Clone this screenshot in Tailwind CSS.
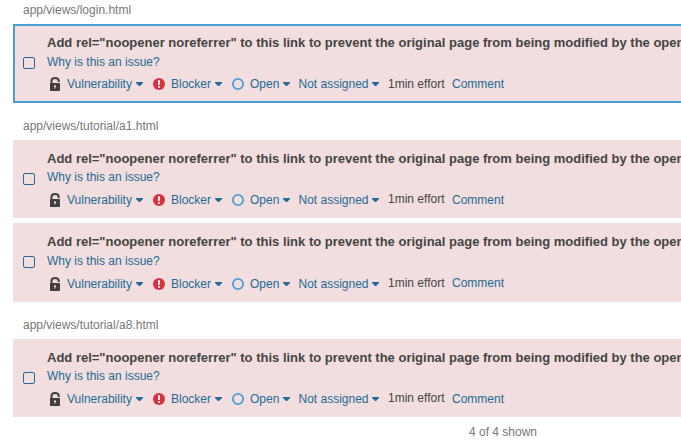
<!DOCTYPE html>
<html lang="en">
<head>
<meta charset="utf-8">
<title>Issues</title>
<script src="https://cdn.jsdelivr.net/npm/@tailwindcss/browser@4"></script>
</head>
<body class="w-[681px] h-[447px] overflow-hidden bg-white text-[12px] leading-[16px] text-[#444]" style="font-family:'Liberation Sans',Arial,sans-serif">
<svg class="hidden">
  <symbol id="caret" viewBox="0 0 7 4"><path d="M0 0h7v1L4 4H3L0 1z" fill="#236a97"/></symbol>
  <symbol id="lock" viewBox="0 0 10 14"><path d="M1.500 7V3.800C1.500 2 3 1 5 1s3.700 1 3.700 2.800V5" fill="none" stroke="#404040" stroke-width="2"/><path fill-rule="evenodd" d="M.7 6h8.600q.7 0 .7.7v6.600q0 .7-.7.7H.7q-.7 0-.7-.7V6.700q0-.7.7-.7zM4 8.500v1.500h.5v1.500h1V10H6V8.500z" fill="#404040"/></symbol>
  <symbol id="blocker" viewBox="0 0 12 12"><circle cx="6" cy="6" r="6" fill="#d4333f"/><path d="M5 2.200h2L6.800 7H5.200zM5.100 8h1.800v1.700H5.100z" fill="#fff"/></symbol>
  <symbol id="open" viewBox="0 0 12 12"><circle cx="6" cy="6" r="5.100" fill="none" stroke="#4b9fd5" stroke-width="1.800"/></symbol>
</svg>
<main class="pl-[13px] flex flex-col">
  <p class="h-[24px] pl-[10px] pt-[2px] text-[#777]">app/views/login.html</p>
  <div data-issue class="h-[79px] w-[700px] bg-[#f2dede] outline-2 -outline-offset-2 outline-[#4b9fd5]"></div>
  <p class="h-[37px] pl-[10px] pt-[15px] text-[#777]">app/views/tutorial/a1.html</p>
  <div data-issue="compact" class="h-[78px] w-[700px] bg-[#f2dede]"></div>
  <div data-issue="roomy" class="mt-[5px] h-[79px] w-[700px] bg-[#f2dede]"></div>
  <p class="h-[37px] pl-[10px] pt-[15px] text-[#777]">app/views/tutorial/a8.html</p>
  <div data-issue="compact" class="h-[78px] w-[700px] bg-[#f2dede]"></div>
  <footer class="pl-[456px] pt-[7px] text-[#777]">4 of 4 shown</footer>
</main>
<template id="issue">
  <div class="flex pl-[10px] pt-[11px]">
    <span class="mt-[22px] size-[12px] shrink-0 rounded-[2px] border border-[#236a97]"></span>
    <div class="ml-[12px] whitespace-nowrap text-[#236a97]">
      <h3 class="h-[19px] text-[13px] font-bold text-[#444]">Add rel="noopener noreferrer" to this link to prevent the original page from being modified by the opener</h3>
      <a data-why class="block h-[22px]">Why is this an issue?</a>
      <div class="flex items-start">
        <div data-fields class="flex items-start">
          <span class="flex w-[106px] pl-[3px]"><svg class="w-[10px] h-[14px] mt-[1px]"><use href="#lock"/></svg><span class="ml-[7px] w-[69px]">Vulnerability</span><svg class="mt-[6px] h-[4px] w-[7px]"><use href="#caret"/></svg></span>
          <span class="flex w-[79px]"><svg class="mt-[2px] size-[12px]"><use href="#blocker"/></svg><span class="ml-[6px] w-[44px]">Blocker</span><svg class="mt-[6px] h-[4px] w-[7px]"><use href="#caret"/></svg></span>
          <span class="flex w-[66px]"><svg class="mt-[2px] size-[12px]"><use href="#open"/></svg><span class="ml-[6px] w-[33px]">Open</span><svg class="mt-[6px] h-[4px] w-[7px]"><use href="#caret"/></svg></span>
          <span class="flex w-[90px] pl-[0.5px]"><span class="w-[73.5px]">Not assigned</span><svg class="mt-[6px] h-[4px] w-[7px]"><use href="#caret"/></svg></span>
        </div>
        <span data-effort class="w-[64px] text-[#444]">1min effort</span>
        <span>Comment</span>
      </div>
    </div>
  </div>
</template>
<script>
const tpl = document.getElementById('issue');
document.querySelectorAll('[data-issue]').forEach(el => {
  const node = tpl.content.cloneNode(true);
  if (el.dataset.issue === 'compact') {
    node.querySelector('[data-why]').className = 'block h-[22px] -mt-px mb-px';
    node.querySelector('[data-effort]').className = 'w-[64px] text-[#444] -mt-px';
  }
  if (el.dataset.issue === 'roomy') {
    node.querySelector('[data-fields]').className = 'flex items-start pt-px';
  }
  el.append(node);
});
</script>
</body>
</html>
